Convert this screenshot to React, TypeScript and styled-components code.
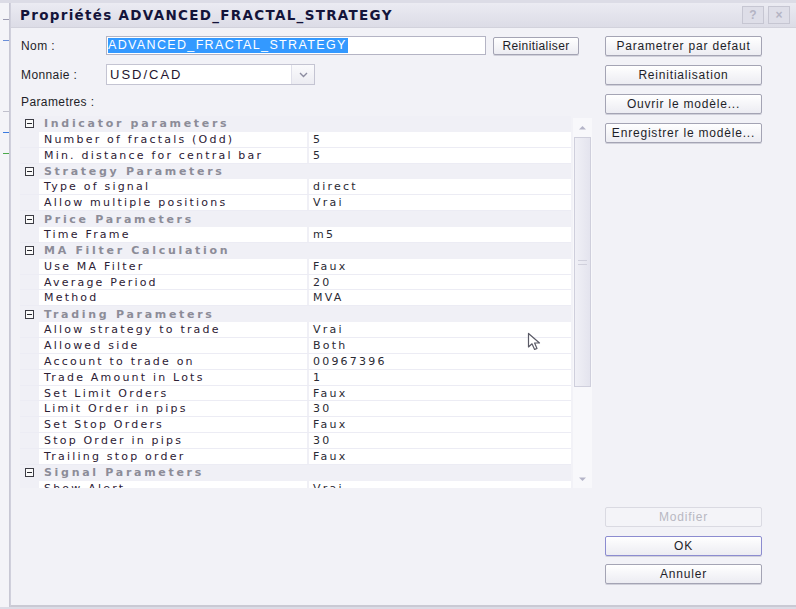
import React from 'react';
import styled, { createGlobalStyle } from 'styled-components';

const GlobalStyle = createGlobalStyle`
html, body {
    margin: 0;
    padding: 0;
    background: #e6e6ee;
    overflow: hidden;
}
* { box-sizing: border-box; }
`;

const Screen = styled.div`
position: relative;
width: 796px;
height: 609px;
display: flex;
flex-direction: row;
padding: 3px 0 2px 0;
background: #dcdce6;
`;

const BackApp = styled.div`
width: 10px;
height: 100%;
background: #f4f4f8;
border-left: 3px solid #f4f4f8;
border-right: 1px solid #c8c8d4;
display: flex;
flex-direction: column;
padding-top: 16px;
gap: 20px;
`;

const BackLine = styled.div<{ color: string; mt?: number }>`
height: 1px;
margin-top: ${p => (p.mt ? p.mt : 0)}px;
background: ${p => p.color};
`;

const Window = styled.div`
flex: 1;
display: flex;
flex-direction: column;
background: #f2f2f7;
border-left: 1px solid #d0d0dc;
border-bottom: 2px solid #cacad4;
`;

const TitleBar = styled.div`
height: 25px;
display: flex;
align-items: center;
justify-content: space-between;
padding: 0 6px 0 9px;
background: linear-gradient(#ebebf2, #dcdce6);
border-bottom: 1px solid #d2d2dc;
`;

const Title = styled.div`
font-family: "DejaVu Sans", Verdana, sans-serif;
font-weight: bold;
font-size: 13.5px;
letter-spacing: 1.3px;
color: #14143a;
`;

const TitleButtons = styled.div`
display: flex;
gap: 4px;
`;

const TitleButton = styled.div`
width: 22px;
height: 18px;
display: flex;
align-items: center;
justify-content: center;
font-family: "Liberation Sans", Arial, sans-serif;
font-size: 12px;
font-weight: bold;
color: #b4b4c4;
background: #dedee8;
border: 1px solid #c6c6d2;
`;

const Body = styled.div`
flex: 1;
display: flex;
flex-direction: row;
padding: 8px 0 21px 9px;
`;

const MainCol = styled.div`
width: 572px;
display: flex;
flex-direction: column;
`;

const SideCol = styled.div`
display: flex;
flex-direction: column;
justify-content: space-between;
margin-left: 13px;
`;

const ButtonGroup = styled.div<{ gap: number }>`
display: flex;
flex-direction: column;
gap: ${p => p.gap}px;
`;

const FieldRow = styled.div<{ mt?: number }>`
display: flex;
align-items: center;
margin-top: ${p => (p.mt ? p.mt : 0)}px;
`;

const Label = styled.div`
width: 86px;
padding-left: 1px;
font-family: "Liberation Sans", Arial, sans-serif;
font-size: 12px;
letter-spacing: 0.4px;
color: #1e1e28;
`;

const TextInput = styled.div`
width: 380px;
height: 19px;
display: flex;
align-items: center;
padding-left: 1px;
background: #fff;
border: 1px solid #b4b4c4;
`;

const Selected = styled.span`
background: #3399ff;
color: #fff;
font-family: "Liberation Sans", Arial, sans-serif;
font-size: 12.5px;
letter-spacing: 1.35px;
line-height: 15px;
padding-right: 1px;
`;

const Combo = styled.div`
width: 209px;
height: 21px;
display: flex;
align-items: stretch;
background: #fff;
border: 1px solid #c4c4d2;
`;

const ComboText = styled.div`
flex: 1;
display: flex;
align-items: center;
padding-left: 3px;
font-family: "Liberation Sans", Arial, sans-serif;
font-size: 13px;
letter-spacing: 2px;
color: #24142e;
`;

const ComboArrow = styled.div`
width: 23px;
display: flex;
align-items: center;
justify-content: center;
border-left: 1px solid #e0e0ea;
background: linear-gradient(#fafafc, #ececf2);
`;

const Button = styled.div<{ w?: number; h?: number; disabled?: boolean; focused?: boolean }>`
width: ${p => (p.w ? p.w : 157)}px;
height: ${p => (p.h ? p.h : 20)}px;
display: flex;
align-items: center;
justify-content: center;
font-family: "Liberation Sans", Arial, sans-serif;
font-size: 12px;
letter-spacing: 0.8px;
color: ${p => (p.disabled ? '#b8b8c2' : '#1e1e28')};
background: ${p => (p.disabled ? '#f4f4f8' : 'linear-gradient(#ffffff, #ececf2)')};
border: 1px solid ${p => (p.disabled ? '#dadae2' : p.focused ? '#8c8cd0' : '#a4a4b4')};
border-radius: 2px;
box-shadow: ${p => (p.disabled ? 'none' : '0 1px 0 #d0d0da')};
`;

const SmallButton = styled(Button)`
margin-left: 7px;
letter-spacing: 0.4px;
`;

const Caption = styled.div`
margin-top: 10px;
padding-left: 1px;
font-family: "Liberation Sans", Arial, sans-serif;
font-size: 12px;
letter-spacing: 0.4px;
color: #1e1e28;
`;

const Grid = styled.div`
position: relative;
margin-top: 7px;
height: 372px;
display: flex;
flex-direction: row;
overflow: hidden;
`;

const GridList = styled.div`
flex: 1;
display: flex;
flex-direction: column;
background: #f0f0f6;
`;

const CategoryRow = styled.div`
height: 15.87px;
flex-shrink: 0;
display: flex;
align-items: center;
background: #f0f0f6;
`;

const Expander = styled.div`
width: 19px;
display: flex;
justify-content: center;
padding-right: 1px;
`;

const MinusBox = styled.div`
width: 9px;
height: 9px;
border: 1px solid #3c3c44;
background: #fafafa;
display: flex;
align-items: center;
justify-content: center;
&::after {
    content: '';
    width: 5px;
    height: 1px;
    background: #2a2a30;
}
`;

const CategoryText = styled.div`
padding-left: 5px;
font-family: "DejaVu Sans", Verdana, sans-serif;
font-weight: bold;
font-size: 11px;
letter-spacing: 2.7px;
color: #8c8c98;
`;

const ItemRow = styled.div`
height: 15.87px;
flex-shrink: 0;
display: flex;
padding-left: 19px;
border-bottom: 1px solid #ececf4;
`;

const Cell = styled.div<{ w?: number }>`
${p => (p.w ? `width: ${p.w}px;` : 'flex: 1;')}
display: flex;
align-items: center;
padding-left: 5px;
margin-right: ${p => (p.w ? 2 : 0)}px;
background: #fff;
font-family: "DejaVu Sans", Verdana, sans-serif;
font-size: 11px;
letter-spacing: 2.2px;
color: #2c2034;
white-space: nowrap;
overflow: hidden;
`;

const ValueCell = styled(Cell)`
padding-left: 4px;
letter-spacing: 2.2px;
color: #2a2a34;
`;

const ScrollBar = styled.div`
width: 19px;
margin-left: 2px;
display: flex;
flex-direction: column;
align-items: stretch;
padding: 2px 0 0 0;
background: #f2f2f7;
`;

const ScrollArrow = styled.div`
height: 18px;
display: flex;
align-items: center;
justify-content: center;
background: #f8f8fb;
`;

const ScrollTrack = styled.div`
flex: 1;
display: flex;
flex-direction: column;
background: #f8f8fb;
`;

const Thumb = styled.div`
height: 250px;
margin: 1px 1px 0 1px;
display: flex;
align-items: center;
justify-content: center;
background: linear-gradient(90deg, #f0f0f6, #e4e4ee);
border: 1px solid #cfcfdc;
`;

const Grip = styled.div`
width: 9px;
height: 5px;
border-top: 1px solid #d0d0dc;
border-bottom: 1px solid #d0d0dc;
`;

const Cursor = styled.svg`
position: absolute;
left: 507px;
top: 216px;
`;

type Item = { name: string; value: string };
type Category = { title: string; items: Item[] };

const categories: Category[] = [
    { title: 'Indicator parameters', items: [
        { name: 'Number of fractals (Odd)', value: '5' },
        { name: 'Min. distance for central bar', value: '5' },
    ] },
    { title: 'Strategy Parameters', items: [
        { name: 'Type of signal', value: 'direct' },
        { name: 'Allow multiple positions', value: 'Vrai' },
    ] },
    { title: 'Price Parameters', items: [
        { name: 'Time Frame', value: 'm5' },
    ] },
    { title: 'MA Filter Calculation', items: [
        { name: 'Use MA Filter', value: 'Faux' },
        { name: 'Average Period', value: '20' },
        { name: 'Method', value: 'MVA' },
    ] },
    { title: 'Trading Parameters', items: [
        { name: 'Allow strategy to trade', value: 'Vrai' },
        { name: 'Allowed side', value: 'Both' },
        { name: 'Account to trade on', value: '00967396' },
        { name: 'Trade Amount in Lots', value: '1' },
        { name: 'Set Limit Orders', value: 'Faux' },
        { name: 'Limit Order in pips', value: '30' },
        { name: 'Set Stop Orders', value: 'Faux' },
        { name: 'Stop Order in pips', value: '30' },
        { name: 'Trailing stop order', value: 'Faux' },
    ] },
    { title: 'Signal Parameters', items: [
        { name: 'Show Alert', value: 'Vrai' },
    ] },
];

const Chevron = ({ up }: { up?: boolean }) => (
    <svg width="9" height="5" viewBox="0 0 9 5">
        <path d={up ? 'M1 4.5 L4.5 1 L8 4.5 Z' : 'M1 0.5 L4.5 4 L8 0.5 Z'} fill="#b4b4c8" />
    </svg>
);

const App: React.FC = () => {
    return (
        <>
            <GlobalStyle />
            <Screen>
                <BackApp>
                    <BackLine color="#9a9ab0" />
                    <BackLine color="#6b8fd8" />
                    <BackLine color="#c0c0cc" mt={50} />
                    <BackLine color="#3a7ae0" />
                    <BackLine color="#4aa84a" />
                </BackApp>
                <Window>
                    <TitleBar>
                        <Title>Propriétés ADVANCED_FRACTAL_STRATEGY</Title>
                        <TitleButtons>
                            <TitleButton>?</TitleButton>
                            <TitleButton>×</TitleButton>
                        </TitleButtons>
                    </TitleBar>
                    <Body>
                        <MainCol>
                            <FieldRow>
                                <Label>Nom :</Label>
                                <TextInput><Selected>ADVANCED_FRACTAL_STRATEGY</Selected></TextInput>
                                <SmallButton w={86} h={18}>Reinitialiser</SmallButton>
                            </FieldRow>
                            <FieldRow mt={9}>
                                <Label>Monnaie :</Label>
                                <Combo>
                                    <ComboText>USD/CAD</ComboText>
                                    <ComboArrow>
                                        <svg width="9" height="6" viewBox="0 0 9 6">
                                            <path d="M1 1 L4.5 4.5 L8 1" stroke="#8c8ca0" strokeWidth="1.4" fill="none" />
                                        </svg>
                                    </ComboArrow>
                                </Combo>
                            </FieldRow>
                            <Caption>Parametres :</Caption>
                            <Grid>
                                <GridList>
                                    {categories.map(cat => (
                                        <React.Fragment key={cat.title}>
                                            <CategoryRow>
                                                <Expander><MinusBox /></Expander>
                                                <CategoryText>{cat.title}</CategoryText>
                                            </CategoryRow>
                                            {cat.items.map(item => (
                                                <ItemRow key={item.name}>
                                                    <Cell w={268}>{item.name}</Cell>
                                                    <ValueCell>{item.value}</ValueCell>
                                                </ItemRow>
                                            ))}
                                        </React.Fragment>
                                    ))}
                                </GridList>
                                <ScrollBar>
                                    <ScrollArrow><Chevron up /></ScrollArrow>
                                    <ScrollTrack>
                                        <Thumb><Grip /></Thumb>
                                    </ScrollTrack>
                                    <ScrollArrow><Chevron /></ScrollArrow>
                                </ScrollBar>
                                <Cursor width="18" height="20" viewBox="0 0 18 20">
                                    <path d="M1.5 1.5 L1.5 15 L5 11.8 L7.6 17.5 L10 16.4 L7.6 11 L12.5 11 Z" fill="#fff" stroke="#5a5a66" strokeWidth="1.2" strokeLinejoin="round" />
                                </Cursor>
                            </Grid>
                        </MainCol>
                        <SideCol>
                            <ButtonGroup gap={9}>
                                <Button>Parametrer par defaut</Button>
                                <Button>Reinitialisation</Button>
                                <Button>Ouvrir le modèle...</Button>
                                <Button>Enregistrer le modèle...</Button>
                            </ButtonGroup>
                            <ButtonGroup gap={8.5}>
                                <Button disabled>Modifier</Button>
                                <Button focused>OK</Button>
                                <Button>Annuler</Button>
                            </ButtonGroup>
                        </SideCol>
                    </Body>
                </Window>
            </Screen>
        </>
    );
};

export default App;
